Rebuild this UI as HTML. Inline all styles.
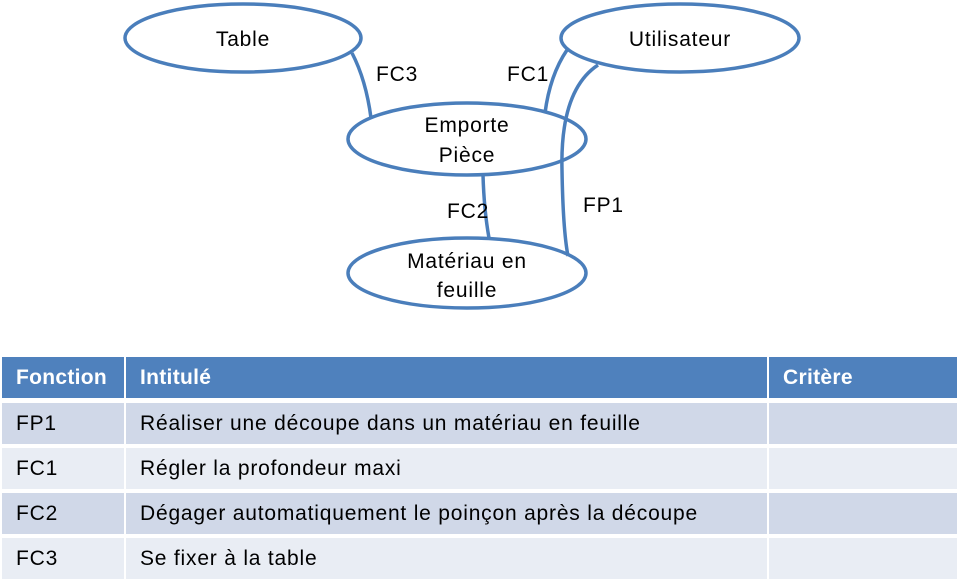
<!DOCTYPE html>
<html><head><meta charset="utf-8"><style>
body{margin:0;width:958px;height:588px;background:#fff;position:relative;overflow:hidden;font-family:"Liberation Sans",sans-serif;}
.c{position:absolute;box-sizing:border-box;font-size:21px;letter-spacing:0.8px;color:#000;padding-left:14px;line-height:42px;height:41px;white-space:nowrap;}
.h{background:#4F81BD;color:#fff;font-weight:bold;letter-spacing:0.3px;}
.a{background:#D0D8E8}.b{background:#E9EDF4}
svg text{font-family:"Liberation Sans",sans-serif;font-size:21px;letter-spacing:0.8px;fill:#000;}
</style></head><body>
<svg width="958" height="350" style="position:absolute;left:0;top:0">
<g fill="none" stroke="#4A7EBB" stroke-width="3.5">
<ellipse cx="243" cy="38" rx="118" ry="34" fill="#fff"/>
<ellipse cx="680" cy="38" rx="119" ry="34" fill="#fff"/>
<path d="M352 53 Q366 80 371 118"/>
<path d="M567 50 Q550 75 545 113"/>
<path d="M598 65 Q560 90 562 170 Q563 230 568 256"/>
<path d="M483 175 Q484 210 489 238"/>
<ellipse cx="467" cy="139" rx="119" ry="36"/>
<ellipse cx="467" cy="273" rx="119" ry="35"/>
</g>
<text x="243" y="46" text-anchor="middle">Table</text>
<text x="680" y="46" text-anchor="middle">Utilisateur</text>
<text x="467" y="132" text-anchor="middle">Emporte</text>
<text x="467" y="162" text-anchor="middle">Pièce</text>
<text x="467" y="268" text-anchor="middle">Matériau en</text>
<text x="467" y="297" text-anchor="middle">feuille</text>
<text x="376" y="81">FC3</text>
<text x="507" y="81">FC1</text>
<text x="447" y="218">FC2</text>
<text x="583" y="212">FP1</text>
</svg>
<div class="c h" style="left:2px;top:357px;width:122px">Fonction</div>
<div class="c h" style="left:126px;top:357px;width:641px">Intitulé</div>
<div class="c h" style="left:769px;top:357px;width:188px">Critère</div>

<div class="c a" style="left:2px;top:403px;width:122px">FP1</div>
<div class="c a" style="left:126px;top:403px;width:641px">Réaliser une découpe dans un matériau en feuille</div>
<div class="c a" style="left:769px;top:403px;width:188px"></div>

<div class="c b" style="left:2px;top:448px;width:122px">FC1</div>
<div class="c b" style="left:126px;top:448px;width:641px">Régler la profondeur maxi</div>
<div class="c b" style="left:769px;top:448px;width:188px"></div>

<div class="c a" style="left:2px;top:493px;width:122px">FC2</div>
<div class="c a" style="left:126px;top:493px;width:641px">Dégager automatiquement le poinçon après la découpe</div>
<div class="c a" style="left:769px;top:493px;width:188px"></div>

<div class="c b" style="left:2px;top:538px;width:122px">FC3</div>
<div class="c b" style="left:126px;top:538px;width:641px">Se fixer à la table</div>
<div class="c b" style="left:769px;top:538px;width:188px"></div>
</body></html>
